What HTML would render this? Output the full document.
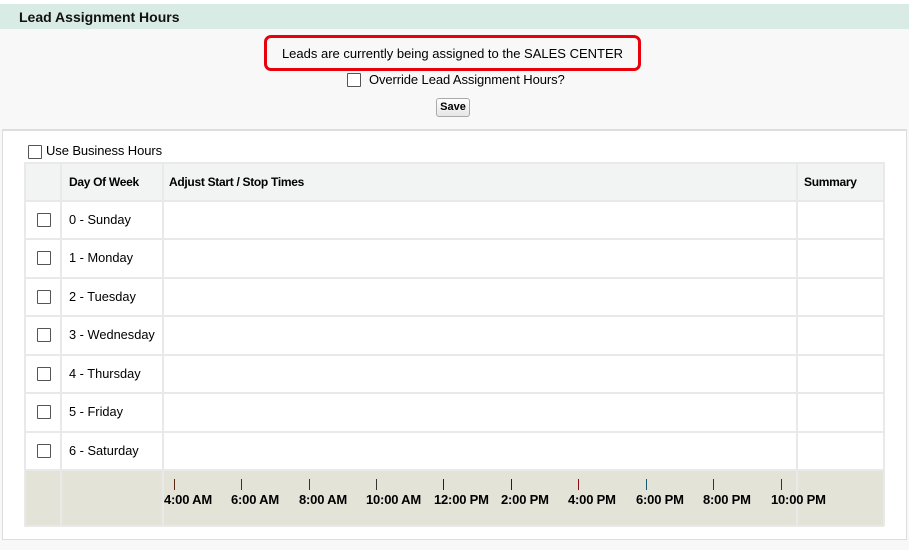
<!DOCTYPE html>
<html><head><style>
body{margin:0;width:909px;height:550px;background:#f8f8f8;font-family:"Liberation Sans",Arial,sans-serif;position:relative;overflow:hidden;color:#000}
.a{position:absolute}
.cb{position:absolute;width:12px;height:12px;border:1px solid #555;background:#fff;border-radius:1px}
.t{position:absolute;font-size:12.8px}
.hl{position:absolute;left:24px;width:860px;height:2px;background:#e9e9e9}
.vl{position:absolute;top:162px;width:2px;height:364px;background:#e9e9e9}
.tk{position:absolute;top:479px;width:1px;height:11px;background:#222}
.lb{position:absolute;top:492px;font-size:13px;font-weight:bold;letter-spacing:-0.2px}
</style></head><body>
<div class="a" style="left:0;top:0;width:909px;height:4px;background:#fff"></div>
<div class="a" style="left:0;top:4px;width:909px;height:25px;background:#d8ebe4"></div>
<div class="a" style="left:19px;top:9px;font-size:14px;font-weight:bold;color:#111">Lead Assignment Hours</div>
<div class="a" style="left:264px;top:35px;width:371px;height:30px;border:3px solid #e8000b;border-radius:7px"></div>
<div class="a" style="left:264px;top:46px;width:377px;text-align:center;font-size:13px">Leads are currently being assigned to the SALES CENTER</div>
<div class="cb" style="left:347px;top:73px"></div>
<div class="a" style="left:369px;top:72px;font-size:13px;letter-spacing:-0.1px">Override Lead Assignment Hours?</div>
<div class="a" style="left:436px;top:98px;width:32px;height:17px;border:1px solid #aaa;border-radius:3px;background:linear-gradient(#fff,#e6e6e6);font-size:11px;font-weight:bold;text-align:center;line-height:17px">Save</div>
<div class="a" style="left:2px;top:129px;width:903px;height:409px;border:1px solid #ddd;background:#fff"></div>
<div class="a" style="left:3px;top:129px;width:903px;height:2px;background:#ddd"></div>
<div class="cb" style="left:28px;top:145px"></div>
<div class="a" style="left:46px;top:143px;font-size:13px;letter-spacing:-0.1px">Use Business Hours</div>
<div class="a" style="left:24px;top:162px;width:860px;height:38px;background:#f2f3f3"></div>
<div class="a" style="left:24px;top:470px;width:860px;height:56px;background:#e3e3d8"></div>
<div class="hl" style="top:162px"></div><div class="hl" style="top:200px"></div><div class="hl" style="top:238px"></div><div class="hl" style="top:277px"></div><div class="hl" style="top:315px"></div><div class="hl" style="top:354px"></div><div class="hl" style="top:392px"></div><div class="hl" style="top:431px"></div><div class="hl" style="top:469px"></div><div class="hl" style="top:525px"></div>
<div class="vl" style="left:24px"></div><div class="vl" style="left:60px"></div><div class="vl" style="left:162px"></div><div class="vl" style="left:796px"></div><div class="vl" style="left:883px"></div>
<div class="t" style="left:69px;top:175px;font-size:12px;font-weight:bold;letter-spacing:-0.3px">Day Of Week</div>
<div class="t" style="left:169px;top:175px;font-size:12px;font-weight:bold;letter-spacing:-0.3px">Adjust Start / Stop Times</div>
<div class="t" style="left:804px;top:175px;font-size:12px;font-weight:bold;letter-spacing:-0.3px">Summary</div>
<div class="cb" style="left:37px;top:213px"></div><div class="t" style="left:69px;top:212px">0 - Sunday</div>
<div class="cb" style="left:37px;top:251px"></div><div class="t" style="left:69px;top:250px">1 - Monday</div>
<div class="cb" style="left:37px;top:290px"></div><div class="t" style="left:69px;top:289px">2 - Tuesday</div>
<div class="cb" style="left:37px;top:328px"></div><div class="t" style="left:69px;top:327px">3 - Wednesday</div>
<div class="cb" style="left:37px;top:367px"></div><div class="t" style="left:69px;top:366px">4 - Thursday</div>
<div class="cb" style="left:37px;top:405px"></div><div class="t" style="left:69px;top:404px">5 - Friday</div>
<div class="cb" style="left:37px;top:444px"></div><div class="t" style="left:69px;top:443px">6 - Saturday</div>
<div class="tk" style="left:174px;background:#5a2a10"></div><div class="lb" style="left:164px">4:00 AM</div>
<div class="tk" style="left:241px;background:#333"></div><div class="lb" style="left:231px">6:00 AM</div>
<div class="tk" style="left:309px;background:#333"></div><div class="lb" style="left:299px">8:00 AM</div>
<div class="tk" style="left:376px;background:#333"></div><div class="lb" style="left:366px">10:00 AM</div>
<div class="tk" style="left:443px"></div><div class="lb" style="left:434px">12:00 PM</div>
<div class="tk" style="left:511px"></div><div class="lb" style="left:501px">2:00 PM</div>
<div class="tk" style="left:578px;background:#8a1010"></div><div class="lb" style="left:568px">4:00 PM</div>
<div class="tk" style="left:646px;background:#1a5a70"></div><div class="lb" style="left:636px">6:00 PM</div>
<div class="tk" style="left:713px;background:#333"></div><div class="lb" style="left:703px">8:00 PM</div>
<div class="tk" style="left:781px;background:#333"></div><div class="lb" style="left:771px">10:00 PM</div>
</body></html>
